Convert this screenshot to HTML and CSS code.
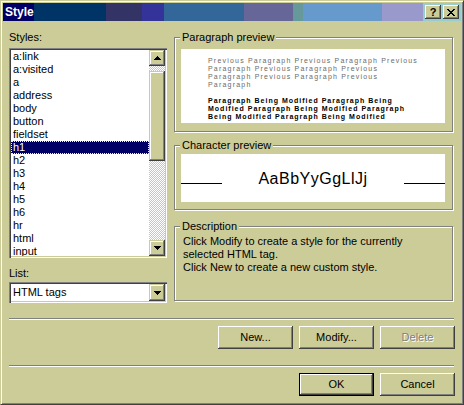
FILE: index.html
```html
<!DOCTYPE html>
<html>
<head>
<meta charset="utf-8">
<title>Style</title>
<link rel="stylesheet" href="styles.css">
</head>
<body>
<div class="window">
  <div class="titlebar">
    <span class="title">Style</span>
    <div class="tbtns">
      <span class="tbtn help">?</span>
      <span class="tbtn close">
        <svg width="8" height="7" viewBox="0 0 8 7" shape-rendering="crispEdges">
          <path d="M0 0h2v1h1v1h2v-1h1v-1h2v1h-1v1h-1v1h-1v1h1v1h1v1h1v1h-2v-1h-1v-1h-2v1h-1v1h-2v-1h1v-1h1v-1h1v-1h-1v-1h-1v-1h-1z" fill="#000"/>
        </svg>
      </span>
    </div>
  </div>
  <div class="content">
    <div class="main">
      <div class="left">
        <div class="label">Styles:</div>
        <div class="listbox sunken">
          <ul class="items">
            <li>a:link</li>
            <li>a:visited</li>
            <li>a</li>
            <li>address</li>
            <li>body</li>
            <li>button</li>
            <li>fieldset</li>
            <li class="selected">h1</li>
            <li>h2</li>
            <li>h3</li>
            <li>h4</li>
            <li>h5</li>
            <li>h6</li>
            <li>hr</li>
            <li>html</li>
            <li>input</li>
          </ul>
          <div class="scrollbar">
            <div class="sbtn">
              <svg width="7" height="4" viewBox="0 0 7 4" shape-rendering="crispEdges"><path d="M3 0h1v1h1v1h1v1h1v1H0v-1h1v-1h1v-1h1z" fill="#000"/></svg>
            </div>
            <div class="track"><div class="thumb"></div></div>
            <div class="sbtn">
              <svg width="7" height="4" viewBox="0 0 7 4" shape-rendering="crispEdges"><path d="M0 0h7v1h-1v1h-1v1h-1v1h-1v-1h-1v-1h-1v-1h-1z" fill="#000"/></svg>
            </div>
          </div>
        </div>
        <div class="label list-label">List:</div>
        <div class="combo sunken">
          <span class="combo-text">HTML tags</span>
          <div class="sbtn combo-btn">
            <svg width="7" height="4" viewBox="0 0 7 4" shape-rendering="crispEdges"><path d="M0 0h7v1h-1v1h-1v1h-1v1h-1v-1h-1v-1h-1v-1h-1z" fill="#000"/></svg>
          </div>
        </div>
      </div>
      <div class="right">
        <div class="group g-para">
          <div class="legend">Paragraph preview</div>
          <div class="preview para-preview">
            <div class="prev">
              <span class="pl">Previous Paragraph Previous Paragraph Previous</span>
              <span class="pl">Paragraph Previous Paragraph Previous</span>
              <span class="pl">Paragraph Previous Paragraph Previous</span>
              <span class="pl">Paragraph</span>
            </div>
            <div class="cur">
              <span class="pl">Paragraph Being Modified Paragraph Being</span>
              <span class="pl">Modified Paragraph Being Modified Paragraph</span>
              <span class="pl">Being Modified Paragraph Being Modified</span>
            </div>
          </div>
        </div>
        <div class="group g-char">
          <div class="legend">Character preview</div>
          <div class="preview char-preview">
            <span class="rule"></span>
            <span class="sample">AaBbYyGgLlJj</span>
            <span class="rule"></span>
          </div>
        </div>
        <div class="group g-desc">
          <div class="legend">Description</div>
          <p class="desc">Click Modify to create a style for the currently<br>selected HTML tag.<br>Click New to create a new custom style.</p>
        </div>
      </div>
    </div>
    <div class="sep"></div>
    <div class="btnrow row1">
      <button class="btn">New...</button>
      <button class="btn">Modify...</button>
      <button class="btn disabled">Delete</button>
    </div>
    <div class="sep sep2"></div>
    <div class="btnrow row2">
      <button class="btn default">OK</button>
      <button class="btn">Cancel</button>
    </div>
  </div>
</div>
</body>
</html>
```

FILE: styles.css
```css
* { box-sizing: border-box; }
html, body { margin: 0; padding: 0; }
body {
  width: 464px;
  height: 405px;
  overflow: hidden;
  background: #cccc99;
  font: 11px/13px "Liberation Sans", Arial, sans-serif;
  color: #000;
}
.window {
  width: 464px;
  height: 405px;
  border: 1px solid;
  border-color: #cccc99 #404040 #404040 #cccc99;
  padding: 2px;
  box-shadow: inset 1px 1px #fff, inset -1px -1px #808080;
  background: #cccc99;
}
.titlebar {
  height: 18px;
  display: flex;
  align-items: center;
  justify-content: space-between;
  background: linear-gradient(to right,
    #000066 0 31px,
    #003366 31px 103px,
    #333366 103px 139px,
    #333399 139px 161px,
    #336699 161px 241px,
    #666699 241px 290px,
    #669999 290px 300px,
    #6699cc 300px 379px,
    #9999cc 379px 420px,
    #99cccc 420px 100%);
}
.title {
  color: #fff;
  font-weight: bold;
  font-size: 12px;
  line-height: 18px;
  padding-left: 2px;
}
.tbtns { display: flex; gap: 2px; margin-right: 2px; }
.tbtn {
  width: 16px;
  height: 14px;
  display: flex;
  align-items: center;
  justify-content: center;
  background: #cccc99;
  box-shadow: inset -1px -1px #404040, inset 1px 1px #fff, inset -2px -2px #808080;
  font-weight: bold;
  font-size: 11px;
  line-height: 14px;
}
.tbtn.help { padding-bottom: 1px; }
.content { padding: 10px 0 0 6px; }
.main { display: flex; gap: 7px; height: 272px; }
.left { width: 158px; display: flex; flex-direction: column; }
.label { height: 13px; }
.sunken {
  background: #fff;
  padding: 2px;
  box-shadow: inset 1px 1px #808080, inset 2px 2px #404040, inset -1px -1px #fff, inset -2px -2px #cccc99;
}
.listbox {
  margin-top: 4px;
  height: 210px;
  display: flex;
}
.items {
  list-style: none;
  margin: 0;
  padding: 0;
  flex: 1;
  overflow: hidden;
}
.items li {
  height: 13px;
  line-height: 13px;
  padding-left: 2px;
  white-space: nowrap;
}
.items li.selected {
  background: #000066;
  color: #fff;
  outline: 1px dotted #ffff99;
  outline-offset: -1px;
}
.scrollbar {
  width: 16px;
  display: flex;
  flex-direction: column;
}
.sbtn {
  width: 16px;
  height: 16px;
  flex: none;
  display: flex;
  align-items: center;
  justify-content: center;
  background: #cccc99;
  box-shadow: inset -1px -1px #404040, inset 1px 1px #cccc99, inset -2px -2px #808080, inset 2px 2px #fff;
}
.sbtn svg { display: block; }
.track {
  flex: 1;
  padding-top: 5px;
  background: repeating-conic-gradient(#fff 0 25%, #cccc99 0 50%) 0 0 / 2px 2px;
}
.thumb {
  height: 90px;
  background: #cccc99;
  box-shadow: inset -1px -1px #404040, inset 1px 1px #cccc99, inset -2px -2px #808080, inset 2px 2px #fff;
}
.list-label { margin-top: 9px; }
.combo {
  margin-top: 2px;
  height: 21px;
  display: flex;
  align-items: center;
}
.combo-text { flex: 1; padding-left: 2px; line-height: 17px; }
.combo-btn { height: 17px; }
.right { width: 279px; display: flex; flex-direction: column; }
.group {
  border: 1px solid #808080;
  box-shadow: 1px 1px #fff, inset 1px 1px #fff;
}
.legend {
  width: fit-content;
  margin: -7px 0 0 5px;
  padding: 0 2px;
  background: #cccc99;
  line-height: 13px;
  height: 13px;
}
.g-para { margin-top: 6px; height: 95px; }
.g-char { margin-top: 13px; height: 65px; }
.g-desc { margin-top: 16px; height: 75px; }
.preview {
  background: #fff;
  margin-left: 6px;
  width: 264px;
}
.para-preview {
  margin-top: 5px;
  height: 74px;
  padding: 8px 0 0 27px;
  font-size: 7px;
  line-height: 8px;
  letter-spacing: 1px;
}
.pl { display: block; white-space: nowrap; height: 8px; }
.prev { color: #6b6b6b; letter-spacing: 1.2px; }
.cur { margin-top: 8px; font-weight: bold; color: #000; }
.char-preview {
  margin-top: 2px;
  height: 48px;
  display: flex;
  justify-content: space-between;
  align-items: flex-start;
}
.rule {
  width: 41px;
  height: 1px;
  margin-top: 29px;
  background: #000;
}
.sample {
  font-size: 16px;
  line-height: 46px;
  padding-top: 2px;
  letter-spacing: 0.5px;
}
.desc {
  margin: 2px 0 0 8px;
  line-height: 13px;
}
.sep {
  margin-top: 15px;
  width: 445px;
  height: 2px;
  border-top: 1px solid #808080;
  border-bottom: 1px solid #fff;
}
.sep2 { margin-top: 16px; }
.btnrow {
  display: flex;
  justify-content: flex-end;
  gap: 6px;
  margin-top: 6px;
  margin-right: 6px;
}
.btn {
  width: 75px;
  height: 23px;
  padding: 0;
  border: 0;
  margin: 0;
  background: #cccc99;
  font: 11px/23px "Liberation Sans", Arial, sans-serif;
  color: #000;
  box-shadow: inset -1px -1px #404040, inset 1px 1px #fff, inset -2px -2px #808080;
}
.btn.default {
  box-shadow: inset 0 0 0 1px #000, inset -2px -2px #404040, inset 2px 2px #fff, inset -3px -3px #808080;
}
.btn.disabled {
  color: #808080;
  text-shadow: 1px 1px #fff;
}
```
